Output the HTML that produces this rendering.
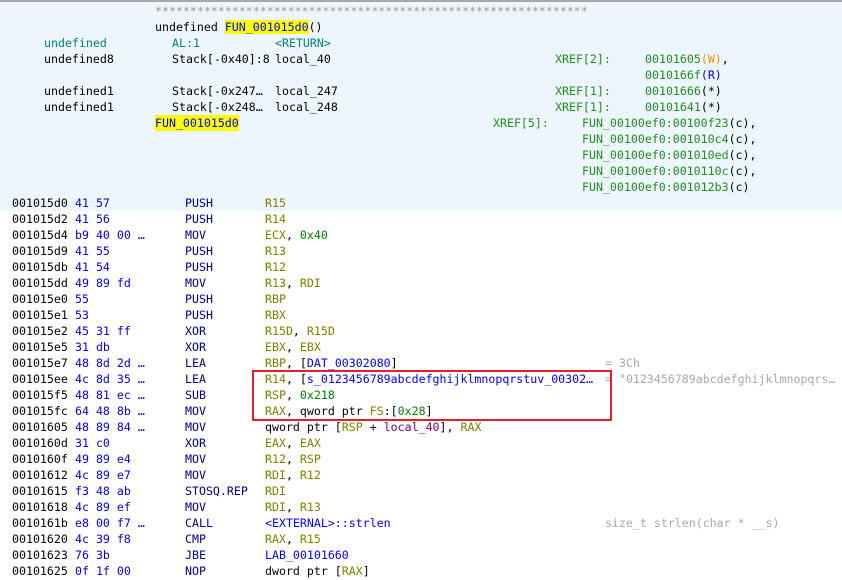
<!DOCTYPE html>
<html><head><meta charset="utf-8"><style>
body{margin:0;width:842px;height:580px;overflow:hidden;background:#fff;font-family:"DejaVu Sans Mono","Liberation Mono",monospace;font-size:11.6px;position:relative}
#hdr{position:absolute;left:0;top:0;width:842px;height:211px;background:#eef6fd}
#bar{position:absolute;left:0;top:0;width:842px;height:2px;background:#a8a8a8}
.r{position:absolute;left:0;height:16px;line-height:16px;white-space:pre;width:842px}
.r>span{position:absolute;top:0}
.a{color:#000}.b{color:#0000e0}.m{color:#000080}.g{color:#808000}.s{color:#008000}.l{color:#0000ff}.v{color:#800080}.x{color:#228b22}.c{color:#a8a8a8}.t{color:#008080}.k{color:#000}
.hl{background:#ffff00}
#box{position:absolute;left:252px;top:370px;width:356px;height:47px;border:2px solid #e0202a}
</style></head><body>
<div id="hdr"></div><div id="bar"></div>
<div class="r" style="top:3px"><span class="c" style="left:155px;color:#999">**************************************************************</span></div>
<div class="r" style="top:19px"><span class="k" style="left:155px">undefined <span class="l hl">FUN_001015d0</span>()</span></div>
<div class="r" style="top:35px"><span class="t" style="left:44px">undefined</span><span class="t" style="left:172px">AL:1</span><span class="t" style="left:275px">&lt;RETURN&gt;</span></div>
<div class="r" style="top:51px"><span class="k" style="left:44px">undefined8</span><span class="k" style="left:172px">Stack[-0x40]:8</span><span class="k" style="left:275px">local_40</span><span class="x" style="left:555px">XREF[2]:</span><span class="x" style="left:645px">00101605<span style="color:#ff8c00">(W)</span><span class="k">,</span></span></div>
<div class="r" style="top:67px"><span class="x" style="left:645px">0010166f<span style="color:#0000ff">(R)</span></span></div>
<div class="r" style="top:83px"><span class="k" style="left:44px">undefined1</span><span class="k" style="left:172px">Stack[-0x247…</span><span class="k" style="left:275px">local_247</span><span class="x" style="left:555px">XREF[1]:</span><span class="x" style="left:645px">00101666<span class="k">(*)</span></span></div>
<div class="r" style="top:99px"><span class="k" style="left:44px">undefined1</span><span class="k" style="left:172px">Stack[-0x248…</span><span class="k" style="left:275px">local_248</span><span class="x" style="left:555px">XREF[1]:</span><span class="x" style="left:645px">00101641<span class="k">(*)</span></span></div>
<div class="r" style="top:115px"><span class="l hl" style="left:155px">FUN_001015d0</span><span class="x" style="left:493px">XREF[5]:</span><span class="x" style="left:582px">FUN_00100ef0:00100f23<span class="k">(c),</span></span></div>
<div class="r" style="top:131px"><span class="x" style="left:582px">FUN_00100ef0:001010c4<span class="k">(c),</span></span></div>
<div class="r" style="top:147px"><span class="x" style="left:582px">FUN_00100ef0:001010ed<span class="k">(c),</span></span></div>
<div class="r" style="top:163px"><span class="x" style="left:582px">FUN_00100ef0:0010110c<span class="k">(c),</span></span></div>
<div class="r" style="top:179px"><span class="x" style="left:582px">FUN_00100ef0:001012b3<span class="k">(c)</span></span></div>

<div class="r" style="top:195px"><span class="a" style="left:12px">001015d0</span><span class="b" style="left:75px">41 57</span><span class="m" style="left:185px">PUSH</span><span class="g" style="left:265px">R15</span></div>
<div class="r" style="top:211px"><span class="a" style="left:12px">001015d2</span><span class="b" style="left:75px">41 56</span><span class="m" style="left:185px">PUSH</span><span class="g" style="left:265px">R14</span></div>
<div class="r" style="top:227px"><span class="a" style="left:12px">001015d4</span><span class="b" style="left:75px">b9 40 00 …</span><span class="m" style="left:185px">MOV</span><span class="g" style="left:265px">ECX<span class="k">, </span><span class="s">0x40</span></span></div>
<div class="r" style="top:243px"><span class="a" style="left:12px">001015d9</span><span class="b" style="left:75px">41 55</span><span class="m" style="left:185px">PUSH</span><span class="g" style="left:265px">R13</span></div>
<div class="r" style="top:259px"><span class="a" style="left:12px">001015db</span><span class="b" style="left:75px">41 54</span><span class="m" style="left:185px">PUSH</span><span class="g" style="left:265px">R12</span></div>
<div class="r" style="top:275px"><span class="a" style="left:12px">001015dd</span><span class="b" style="left:75px">49 89 fd</span><span class="m" style="left:185px">MOV</span><span class="g" style="left:265px">R13<span class="k">, </span>RDI</span></div>
<div class="r" style="top:291px"><span class="a" style="left:12px">001015e0</span><span class="b" style="left:75px">55</span><span class="m" style="left:185px">PUSH</span><span class="g" style="left:265px">RBP</span></div>
<div class="r" style="top:307px"><span class="a" style="left:12px">001015e1</span><span class="b" style="left:75px">53</span><span class="m" style="left:185px">PUSH</span><span class="g" style="left:265px">RBX</span></div>
<div class="r" style="top:323px"><span class="a" style="left:12px">001015e2</span><span class="b" style="left:75px">45 31 ff</span><span class="m" style="left:185px">XOR</span><span class="g" style="left:265px">R15D<span class="k">, </span>R15D</span></div>
<div class="r" style="top:339px"><span class="a" style="left:12px">001015e5</span><span class="b" style="left:75px">31 db</span><span class="m" style="left:185px">XOR</span><span class="g" style="left:265px">EBX<span class="k">, </span>EBX</span></div>
<div class="r" style="top:355px"><span class="a" style="left:12px">001015e7</span><span class="b" style="left:75px">48 8d 2d …</span><span class="m" style="left:185px">LEA</span><span class="g" style="left:265px">RBP<span class="k">, [</span><span class="l">DAT_00302080</span><span class="k">]</span></span><span class="c" style="left:605px">= 3Ch</span></div>
<div class="r" style="top:371px"><span class="a" style="left:12px">001015ee</span><span class="b" style="left:75px">4c 8d 35 …</span><span class="m" style="left:185px">LEA</span><span class="g" style="left:265px">R14<span class="k">, [</span><span class="l">s_0123456789abcdefghijklmnopqrstuv_00302…</span></span><span class="c" style="left:605px">= "0123456789abcdefghijklmnopqrs…</span></div>
<div class="r" style="top:387px"><span class="a" style="left:12px">001015f5</span><span class="b" style="left:75px">48 81 ec …</span><span class="m" style="left:185px">SUB</span><span class="g" style="left:265px">RSP<span class="k">, </span><span class="s">0x218</span></span></div>
<div class="r" style="top:403px"><span class="a" style="left:12px">001015fc</span><span class="b" style="left:75px">64 48 8b …</span><span class="m" style="left:185px">MOV</span><span class="g" style="left:265px">RAX<span class="k">, qword ptr </span>FS<span class="k">:[</span><span class="s">0x28</span><span class="k">]</span></span></div>
<div class="r" style="top:419px"><span class="a" style="left:12px">00101605</span><span class="b" style="left:75px">48 89 84 …</span><span class="m" style="left:185px">MOV</span><span class="k" style="left:265px">qword ptr [<span class="g">RSP</span> + <span class="v">local_40</span>], <span class="g">RAX</span></span></div>
<div class="r" style="top:435px"><span class="a" style="left:12px">0010160d</span><span class="b" style="left:75px">31 c0</span><span class="m" style="left:185px">XOR</span><span class="g" style="left:265px">EAX<span class="k">, </span>EAX</span></div>
<div class="r" style="top:451px"><span class="a" style="left:12px">0010160f</span><span class="b" style="left:75px">49 89 e4</span><span class="m" style="left:185px">MOV</span><span class="g" style="left:265px">R12<span class="k">, </span>RSP</span></div>
<div class="r" style="top:467px"><span class="a" style="left:12px">00101612</span><span class="b" style="left:75px">4c 89 e7</span><span class="m" style="left:185px">MOV</span><span class="g" style="left:265px">RDI<span class="k">, </span>R12</span></div>
<div class="r" style="top:483px"><span class="a" style="left:12px">00101615</span><span class="b" style="left:75px">f3 48 ab</span><span class="m" style="left:185px">STOSQ.REP</span><span class="g" style="left:265px">RDI</span></div>
<div class="r" style="top:499px"><span class="a" style="left:12px">00101618</span><span class="b" style="left:75px">4c 89 ef</span><span class="m" style="left:185px">MOV</span><span class="g" style="left:265px">RDI<span class="k">, </span>R13</span></div>
<div class="r" style="top:515px"><span class="a" style="left:12px">0010161b</span><span class="b" style="left:75px">e8 00 f7 …</span><span class="m" style="left:185px">CALL</span><span class="l" style="left:265px">&lt;EXTERNAL&gt;::strlen</span><span class="c" style="left:605px">size_t strlen(char * __s)</span></div>
<div class="r" style="top:531px"><span class="a" style="left:12px">00101620</span><span class="b" style="left:75px">4c 39 f8</span><span class="m" style="left:185px">CMP</span><span class="g" style="left:265px">RAX<span class="k">, </span>R15</span></div>
<div class="r" style="top:547px"><span class="a" style="left:12px">00101623</span><span class="b" style="left:75px">76 3b</span><span class="m" style="left:185px">JBE</span><span class="l" style="left:265px">LAB_00101660</span></div>
<div class="r" style="top:563px"><span class="a" style="left:12px">00101625</span><span class="b" style="left:75px">0f 1f 00</span><span class="m" style="left:185px">NOP</span><span class="k" style="left:265px">dword ptr [<span class="g">RAX</span>]</span></div>
<div id="box"></div>
</body></html>
